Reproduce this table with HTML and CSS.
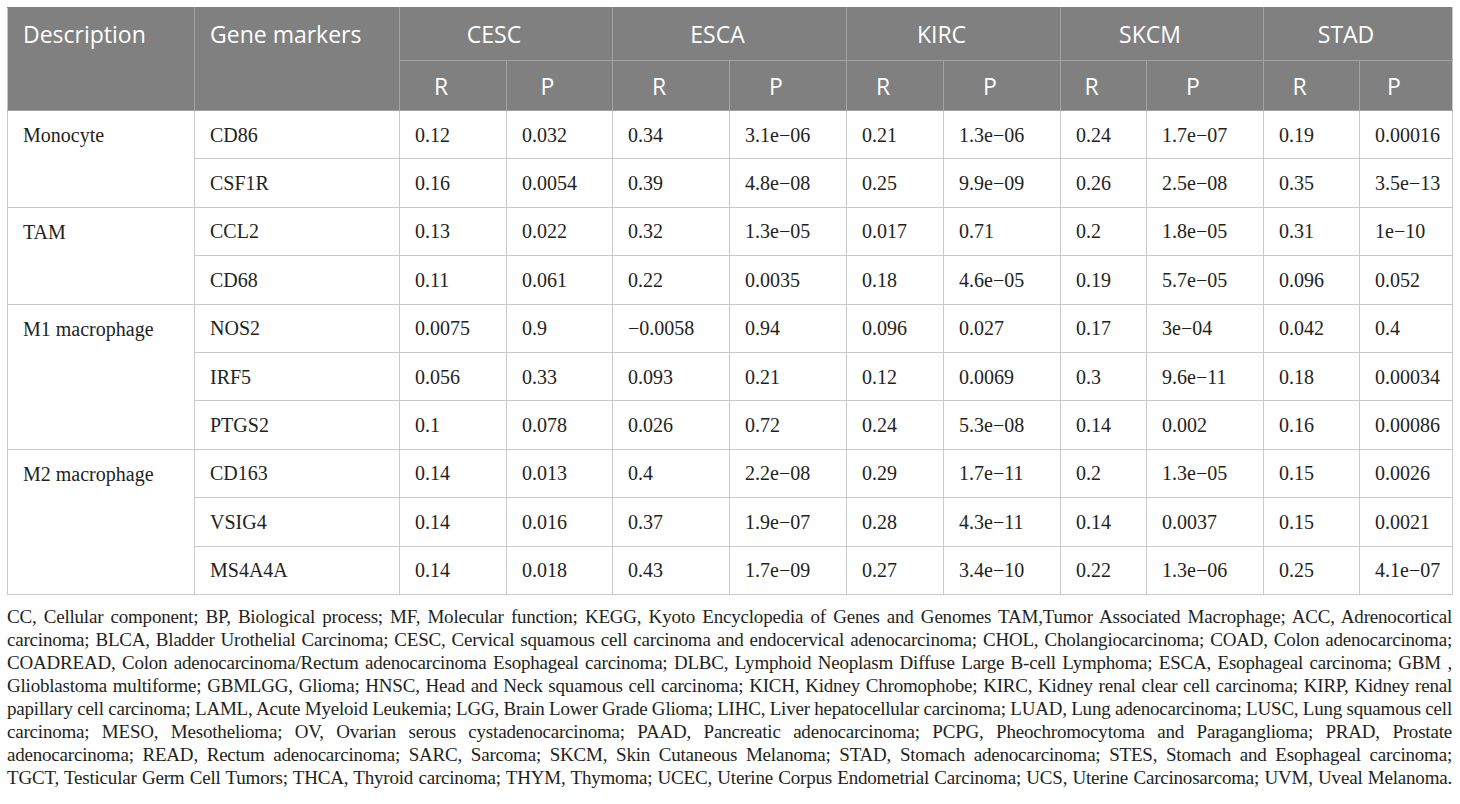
FILE: index.html
```html
<!DOCTYPE html>
<html>
<head>
<meta charset="utf-8">
<link rel="stylesheet" href="styles.css">
</head>
<body>
<div class="page">
<table class="data">
<colgroup>
<col class="c-desc"><col class="c-gene">
<col class="c107"><col class="c106">
<col class="c117"><col class="c117">
<col class="c97"><col class="c117">
<col class="c86"><col class="c117">
<col class="c96"><col class="c93">
</colgroup>
<thead>
<tr class="h1">
<th class="hl" rowspan="2">Description</th>
<th class="hl" rowspan="2">Gene markers</th>
<th class="hc" colspan="2">CESC</th>
<th class="hc" colspan="2">ESCA</th>
<th class="hc" colspan="2">KIRC</th>
<th class="hc" colspan="2">SKCM</th>
<th class="hc" colspan="2">STAD</th>
</tr>
<tr class="h2">
<th class="hc">R</th><th class="hc">P</th>
<th class="hc">R</th><th class="hc">P</th>
<th class="hc">R</th><th class="hc">P</th>
<th class="hc">R</th><th class="hc">P</th>
<th class="hc">R</th><th class="hc">P</th>
</tr>
</thead>
<tbody>
<tr><td class="grp" rowspan="2">Monocyte</td><td>CD86</td><td>0.12</td><td>0.032</td><td>0.34</td><td>3.1e−06</td><td>0.21</td><td>1.3e−06</td><td>0.24</td><td>1.7e−07</td><td>0.19</td><td>0.00016</td></tr>
<tr><td>CSF1R</td><td>0.16</td><td>0.0054</td><td>0.39</td><td>4.8e−08</td><td>0.25</td><td>9.9e−09</td><td>0.26</td><td>2.5e−08</td><td>0.35</td><td>3.5e−13</td></tr>
<tr><td class="grp" rowspan="2">TAM</td><td>CCL2</td><td>0.13</td><td>0.022</td><td>0.32</td><td>1.3e−05</td><td>0.017</td><td>0.71</td><td>0.2</td><td>1.8e−05</td><td>0.31</td><td>1e−10</td></tr>
<tr><td>CD68</td><td>0.11</td><td>0.061</td><td>0.22</td><td>0.0035</td><td>0.18</td><td>4.6e−05</td><td>0.19</td><td>5.7e−05</td><td>0.096</td><td>0.052</td></tr>
<tr><td class="grp" rowspan="3">M1 macrophage</td><td>NOS2</td><td>0.0075</td><td>0.9</td><td>−0.0058</td><td>0.94</td><td>0.096</td><td>0.027</td><td>0.17</td><td>3e−04</td><td>0.042</td><td>0.4</td></tr>
<tr><td>IRF5</td><td>0.056</td><td>0.33</td><td>0.093</td><td>0.21</td><td>0.12</td><td>0.0069</td><td>0.3</td><td>9.6e−11</td><td>0.18</td><td>0.00034</td></tr>
<tr><td>PTGS2</td><td>0.1</td><td>0.078</td><td>0.026</td><td>0.72</td><td>0.24</td><td>5.3e−08</td><td>0.14</td><td>0.002</td><td>0.16</td><td>0.00086</td></tr>
<tr><td class="grp" rowspan="3">M2 macrophage</td><td>CD163</td><td>0.14</td><td>0.013</td><td>0.4</td><td>2.2e−08</td><td>0.29</td><td>1.7e−11</td><td>0.2</td><td>1.3e−05</td><td>0.15</td><td>0.0026</td></tr>
<tr><td>VSIG4</td><td>0.14</td><td>0.016</td><td>0.37</td><td>1.9e−07</td><td>0.28</td><td>4.3e−11</td><td>0.14</td><td>0.0037</td><td>0.15</td><td>0.0021</td></tr>
<tr><td>MS4A4A</td><td>0.14</td><td>0.018</td><td>0.43</td><td>1.7e−09</td><td>0.27</td><td>3.4e−10</td><td>0.22</td><td>1.3e−06</td><td>0.25</td><td>4.1e−07</td></tr>
</tbody>
</table>
<p class="note">
<span class="ln">CC, Cellular component; BP, Biological process; MF, Molecular function; KEGG, Kyoto Encyclopedia of Genes and Genomes TAM,Tumor Associated Macrophage; ACC, Adrenocortical</span>
<span class="ln">carcinoma; BLCA, Bladder Urothelial Carcinoma; CESC, Cervical squamous cell carcinoma and endocervical adenocarcinoma; CHOL, Cholangiocarcinoma; COAD, Colon adenocarcinoma;</span>
<span class="ln">COADREAD, Colon adenocarcinoma/Rectum adenocarcinoma Esophageal carcinoma; DLBC, Lymphoid Neoplasm Diffuse Large B-cell Lymphoma; ESCA, Esophageal carcinoma; GBM ,</span>
<span class="ln">Glioblastoma multiforme; GBMLGG, Glioma; HNSC, Head and Neck squamous cell carcinoma; KICH, Kidney Chromophobe; KIRC, Kidney renal clear cell carcinoma; KIRP, Kidney renal</span>
<span class="ln">papillary cell carcinoma; LAML, Acute Myeloid Leukemia; LGG, Brain Lower Grade Glioma; LIHC, Liver hepatocellular carcinoma; LUAD, Lung adenocarcinoma; LUSC, Lung squamous cell</span>
<span class="ln">carcinoma; MESO, Mesothelioma; OV, Ovarian serous cystadenocarcinoma; PAAD, Pancreatic adenocarcinoma; PCPG, Pheochromocytoma and Paraganglioma; PRAD, Prostate</span>
<span class="ln">adenocarcinoma; READ, Rectum adenocarcinoma; SARC, Sarcoma; SKCM, Skin Cutaneous Melanoma; STAD, Stomach adenocarcinoma; STES, Stomach and Esophageal carcinoma;</span>
<span class="ln">TGCT, Testicular Germ Cell Tumors; THCA, Thyroid carcinoma; THYM, Thymoma; UCEC, Uterine Corpus Endometrial Carcinoma; UCS, Uterine Carcinosarcoma; UVM, Uveal Melanoma.</span>
</p>
</div>
</body>
</html>
```

FILE: styles.css
```css
html, body {
  margin: 0;
  padding: 0;
  background: #ffffff;
}

.page {
  padding: 7px 8px 0 7px;
  width: 1445px;
}

.data {
  width: 1445px;
  table-layout: fixed;
  border-collapse: collapse;
  font-family: "Liberation Serif", "Times New Roman", serif;
  font-size: 20px;
  color: #231f20;
}

.c-desc { width: 187px; }
.c-gene { width: 205px; }
.c107 { width: 107px; }
.c106 { width: 106px; }
.c117 { width: 117px; }
.c97 { width: 97px; }
.c86 { width: 86px; }
.c96 { width: 96px; }
.c93 { width: 93px; }

.data thead th {
  background: #808080;
  color: #ffffff;
  font-family: "Open Sans", "Noto Sans", sans-serif;
  font-weight: 400;
  font-size: 23px;
  border: 1px solid #a3a3a3;
  border-top-color: #808080;
  white-space: nowrap;
}

.data thead tr.h1 { height: 53px; }
.data thead tr.h2 { height: 50px; }

.data th.hl {
  text-align: left;
  vertical-align: top;
  padding: 0 0 0 15px;
  line-height: 52px;
}

.data th.hc {
  text-align: center;
  vertical-align: middle;
  padding: 0 27px 0 3px;
  line-height: 30px;
}

.data thead tr.h1 th:first-child { border-left-color: #c8c8c8; }
.data thead tr.h1 th:last-child { border-right-color: #c8c8c8; }
.data thead tr.h2 th:last-child { border-right-color: #c8c8c8; }

.data tbody tr { height: 48.4px; }

.data tbody td {
  border: 1px solid #c9c9c9;
  padding: 0 15px;
  vertical-align: middle;
  line-height: 24px;
  white-space: nowrap;
}

.data tbody td.grp {
  vertical-align: top;
  line-height: 48px;
}

.note {
  margin: 10px 0 0 0;
  width: 1445px;
  font-family: "Liberation Serif", "Times New Roman", serif;
  font-size: 19px;
  letter-spacing: -0.2px;
  word-spacing: -2px;
  line-height: 23px;
  color: #231f20;
}

.ln {
  display: block;
  text-align: justify;
  text-align-last: justify;
}
```
